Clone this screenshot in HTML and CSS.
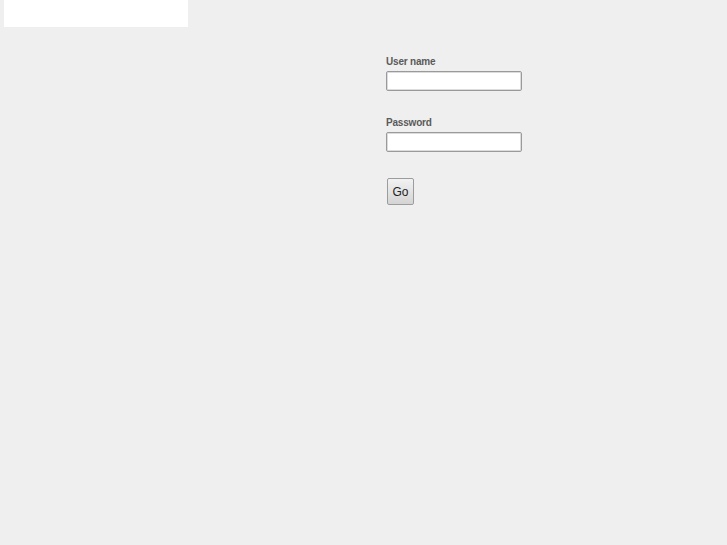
FILE: index.html
```html
<!DOCTYPE html>
<html>
<head>
<meta charset="utf-8">
<link rel="stylesheet" href="styles.css">
</head>
<body>
<div class="header"></div>
<form class="login">
  <label class="label" for="u">User name</label>
  <input class="field" id="u" type="text">
  <label class="label second" for="p">Password</label>
  <input class="field" id="p" type="password">
  <button class="go" type="button">Go</button>
</form>
</body>
</html>
```
FILE: styles.css
```css
html, body {
  margin: 0;
  padding: 0;
  background: #efefef;
  font-family: "Liberation Sans", Arial, sans-serif;
}
.header {
  margin-left: 4px;
  width: 184px;
  height: 27px;
  background: #ffffff;
}
.login {
  margin: 0 0 0 386px;
  padding-top: 29px;
  display: flex;
  flex-direction: column;
  align-items: flex-start;
}
.label {
  display: block;
  font-size: 10px;
  line-height: 12px;
  font-weight: bold;
  color: #5a5a5a;
  letter-spacing: -0.2px;
  margin-bottom: 3px;
}
.label.second {
  margin-top: 26px;
}
.field {
  box-sizing: border-box;
  width: 136px;
  height: 20px;
  margin: 0;
  padding: 0 3px;
  border: 1px solid #9a9a9a;
  border-radius: 2px;
  background: #ffffff;
  box-shadow: inset 0 0 0 1px #dcdcdc;
  outline: none;
}
.go {
  box-sizing: border-box;
  margin: 26px 0 0 1px;
  width: 27px;
  height: 27px;
  padding: 0;
  border: 1px solid #9c9c9c;
  border-radius: 2px;
  background: linear-gradient(#f2f2f2, #d4d4d4);
  font-family: "Liberation Sans", Arial, sans-serif;
  font-size: 12px;
  color: #222222;
  cursor: pointer;
}
```
